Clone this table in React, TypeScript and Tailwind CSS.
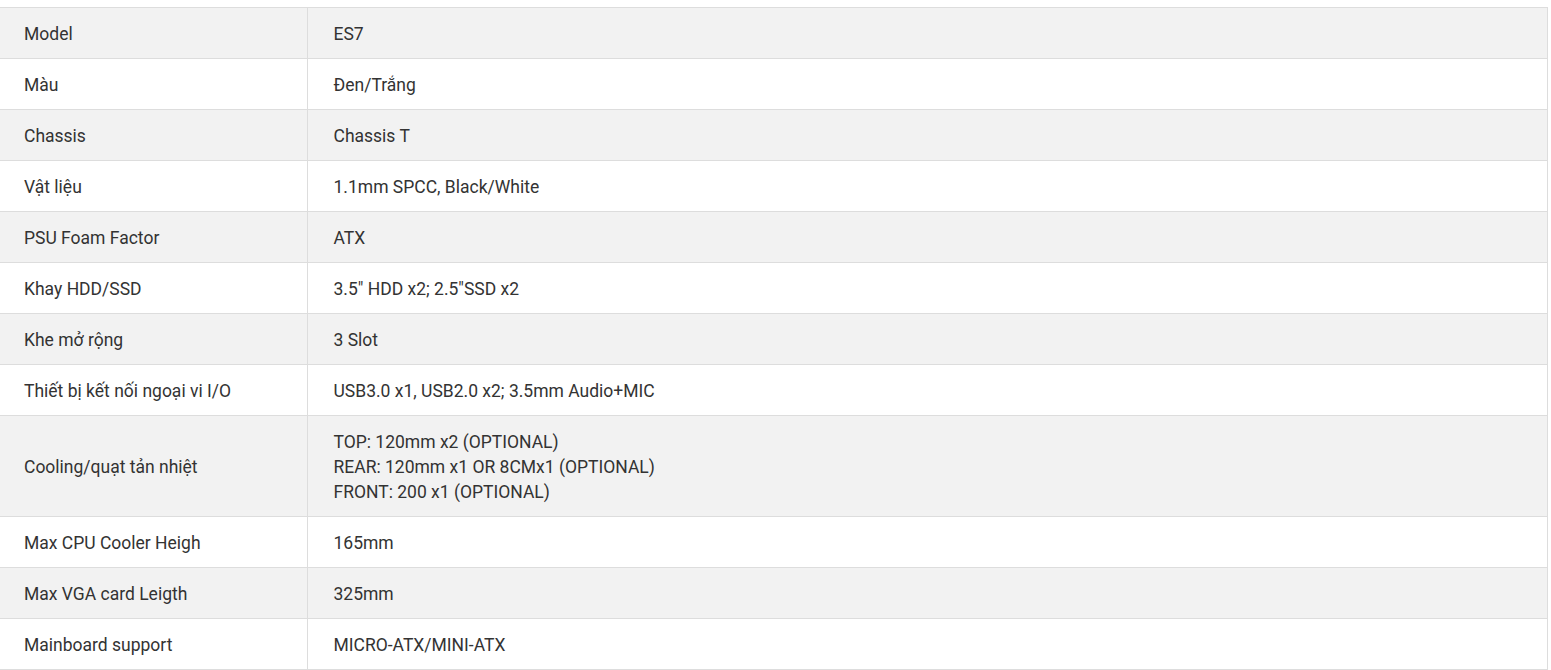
import React from "react";

const rows: [string, string[]][] = [
  ["Model", ["ES7"]],
  ["Màu", ["Đen/Trắng"]],
  ["Chassis", ["Chassis T"]],
  ["Vật liệu", ["1.1mm SPCC, Black/White"]],
  ["PSU Foam Factor", ["ATX"]],
  ["Khay HDD/SSD", ["3.5\" HDD x2; 2.5\"SSD x2"]],
  ["Khe mở rộng", ["3 Slot"]],
  ["Thiết bị kết nối ngoại vi I/O", ["USB3.0 x1, USB2.0 x2; 3.5mm Audio+MIC"]],
  [
    "Cooling/quạt tản nhiệt",
    ["TOP: 120mm x2 (OPTIONAL)", "REAR: 120mm x1 OR 8CMx1 (OPTIONAL)", "FRONT: 200 x1 (OPTIONAL)"],
  ],
  ["Max CPU Cooler Heigh", ["165mm"]],
  ["Max VGA card Leigth", ["325mm"]],
  ["Mainboard support", ["MICRO-ATX/MINI-ATX"]],
];

export default function App() {
  return (
    <div className="min-h-[670px] bg-white pt-[7px] pr-[3px]" style={{ fontFamily: "Roboto, 'Noto Sans', sans-serif" }}>
      <table className="w-full border-collapse text-[17.5px] leading-[25px] text-[#333]">
        <tbody>
          {rows.map(([k, v], i) => (
            <tr key={i} className={i % 2 === 0 ? "bg-[#f2f2f2]" : "bg-white"}>
              <td className="w-[307px] border-t border-b border-r border-[#dddddd] pl-[24px] pr-4 pt-[14px] pb-[11px] align-middle">
                {k}
              </td>
              <td className="border-t border-b border-r border-[#dddddd] pl-[26px] pr-4 pt-[14px] pb-[11px] align-middle">
                {v.map((line, j) => (
                  <div key={j}>{line}</div>
                ))}
              </td>
            </tr>
          ))}
        </tbody>
      </table>
    </div>
  );
}
